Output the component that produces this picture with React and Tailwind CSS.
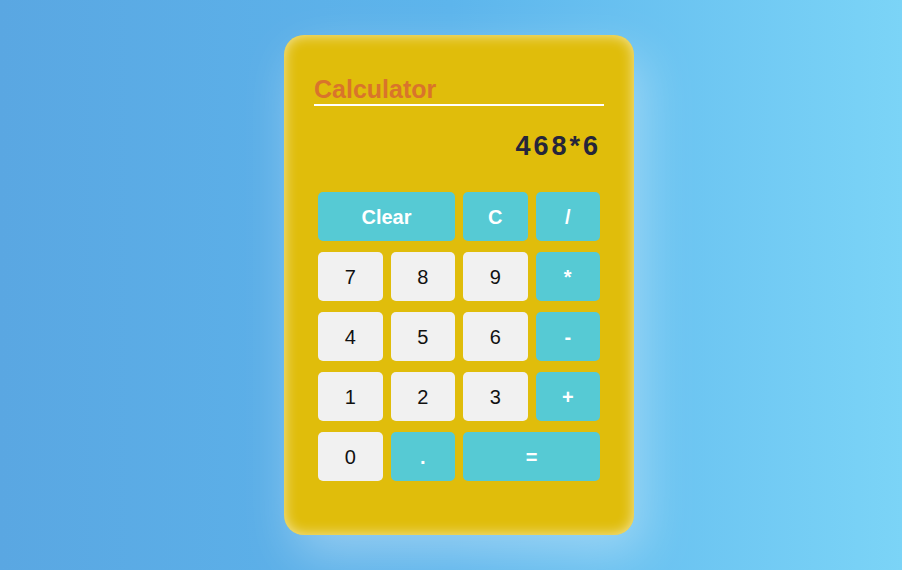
import React, { useState } from 'react';

const KEYS = [
  { label: 'Clear', kind: 'op', span: 2 },
  { label: 'C', kind: 'op' },
  { label: '/', kind: 'op' },
  { label: '7', kind: 'num' },
  { label: '8', kind: 'num' },
  { label: '9', kind: 'num' },
  { label: '*', kind: 'op' },
  { label: '4', kind: 'num' },
  { label: '5', kind: 'num' },
  { label: '6', kind: 'num' },
  { label: '-', kind: 'op' },
  { label: '1', kind: 'num' },
  { label: '2', kind: 'num' },
  { label: '3', kind: 'num' },
  { label: '+', kind: 'op' },
  { label: '0', kind: 'num' },
  { label: '.', kind: 'op' },
  { label: '=', kind: 'op', span: 2 }
];

const App = () => {
  const [expr, setExpr] = useState('468*6');

  const handleKey = (label) => {
    if (label === 'Clear') return setExpr('');
    if (label === 'C') return setExpr(expr.slice(0, -1));
    if (label === '=') {
      try {
        // eslint-disable-next-line no-new-func
        setExpr(String(Function(`return (${expr})`)()));
      } catch (e) {
        setExpr('Error');
      }
      return;
    }
    setExpr(expr + label);
  };

  return (
    <div className="min-h-[570px] flex items-center justify-center pl-[16px] bg-gradient-to-r from-[#5aa7e2] via-[#5db5ec] to-[#7bd4f7] font-['Liberation_Sans',Arial,sans-serif]">
      <div className="w-[350px] h-[500px] rounded-[20px] bg-[#e0bd0b] px-[30px] pt-[40px] shadow-[inset_0_0_14px_rgba(255,255,255,0.65),10px_20px_50px_rgba(255,255,255,0.35)]">
        <h1 className="text-[25px] leading-[29px] font-bold text-[#d9742b] border-b-2 border-white">
          Calculator
        </h1>
        <div className="mt-[25px] mr-[3px] text-right text-[27px] leading-[31px] font-bold tracking-[3px] text-[#25253a] h-[31px]">
          {expr}
        </div>
        <div className="mt-[30px] mx-[4px] grid grid-cols-4 gap-x-[8px] gap-y-[11px]">
          {KEYS.map((k) => (
            <button
              key={k.label}
              type="button"
              onClick={() => handleKey(k.label)}
              className={`h-[49px] rounded-[5px] text-[20px] ${
                k.span === 2 ? 'col-span-2' : ''
              } ${
                k.kind === 'op'
                  ? 'bg-[#56cad4] text-white font-bold'
                  : 'bg-[#f1f1f1] text-[#111]'
              }`}
            >
              {k.label}
            </button>
          ))}
        </div>
      </div>
    </div>
  );
};

export default App;
